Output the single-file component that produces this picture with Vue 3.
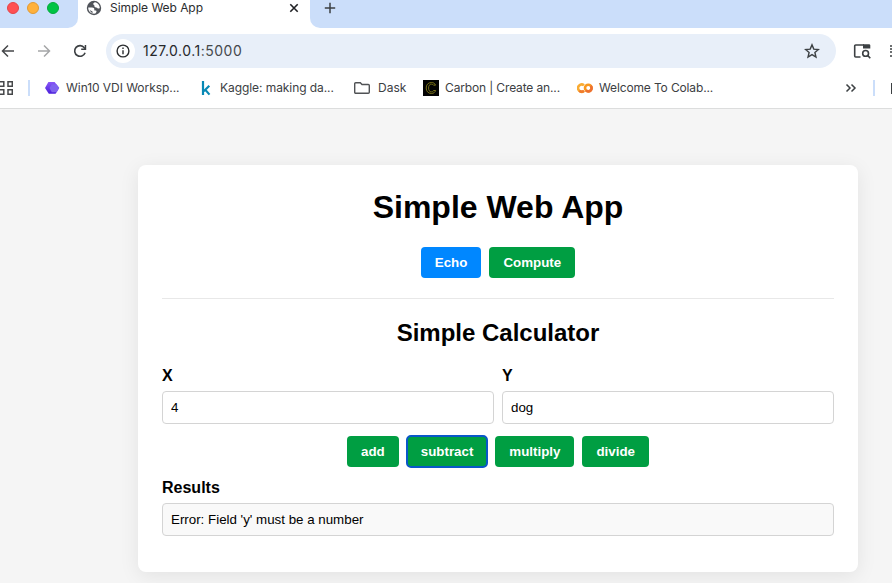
<script setup>
import { ref } from 'vue'

const x = ref('4')
const y = ref('dog')
const result = ref("Error: Field 'y' must be a number")
const active = ref('subtract')
const operations = ['add', 'subtract', 'multiply', 'divide']
</script>

<template>
  <div class="window">
    <header class="chrome">
      <div class="tabstrip">
        <div class="lights">
          <i class="light red"></i><i class="light amber"></i><i class="light green"></i>
        </div>
        <div class="tab">
          <svg class="globe" width="16" height="16" viewBox="0 0 16 16">
            <circle cx="8" cy="8" r="7.200" fill="#50545a" />
            <path d="M2.200 7.500h3.900c1.500 0 2.300.7 2.200 1.900-.1 1 .3 1.300 1.400 1.200.9-.1 1 .8.6 1.600L9.400 13.600C5.200 14.300 2.200 11.300 2.200 7.500zM3.800 9.300c.2 1.100.9 1.600 1.900 1.700.7.100.9.6.9 1.300v.8C5 12.500 3.600 11 3.800 9.300z" fill="#fff" fill-rule="evenodd" />
            <path d="M9.200 2.300c-1.200.4-2.100 1.100-1.900 2 .2.700 1.200.5 1.100 1.400-.1 1.300.7 1.800 1.900 1.700 1.200 0 1 1.200 2.100 1.200.5 0 .9-.2 1.400-.6C13.700 5.200 11.900 3 9.200 2.300z" fill="#fff" />
          </svg>
          <span class="tab-title">Simple Web App</span>
          <svg class="close" width="10" height="10" viewBox="0 0 10 10"><path d="M1.300 1.300l7.400 7.400M8.700 1.300L1.300 8.700" stroke="#202124" stroke-width="1.600" /></svg>
        </div>
        <div class="newtab">
          <svg width="12" height="12" viewBox="0 0 12 12"><path d="M6 .8v10.400M.8 6h10.400" stroke="#3c4043" stroke-width="1.500" /></svg>
        </div>
      </div>

      <div class="toolbar">
        <svg class="back" width="16" height="16" viewBox="0 0 16 16"><path d="M14 8H2.800M8 2.500L2.500 8 8 13.500" fill="none" stroke="#454749" stroke-width="1.500" /></svg>
        <svg class="forward" width="16" height="16" viewBox="0 0 16 16"><path d="M2 8h11.200M8 2.500L13.500 8 8 13.500" fill="none" stroke="#a5a6a8" stroke-width="1.500" /></svg>
        <svg class="reload" width="16" height="16" viewBox="0 0 16 16"><path d="M13.100 9.700A5.350 5.350 0 1 1 12.300 4.700L13.500 6" fill="none" stroke="#3c4043" stroke-width="1.600" /><path d="M14.200 2v5H9.200V5.500h3.500V2z" fill="#3c4043" /></svg>
        <div class="omnibox">
          <span class="info">
            <svg width="14" height="14" viewBox="0 0 14 14"><circle cx="7" cy="7" r="5.900" fill="none" stroke="#2c2e30" stroke-width="1.400" /><path d="M7 6.200v4M7 3.600v1.500" stroke="#2c2e30" stroke-width="1.400" /></svg>
          </span>
          <span class="url">127.0.0.1<span class="port">:5000</span></span>
          <svg class="star" width="16" height="16" viewBox="0 0 16 16"><path d="M8 1.900l1.800 4.200 4.600.4-3.500 3 1.050 4.500L8 11.600 4.050 14l1.050-4.500-3.500-3 4.600-.4z" fill="none" stroke="#3c4043" stroke-width="1.400" /></svg>
        </div>
        <svg class="lens" width="18" height="16" viewBox="0 0 18 16">
          <path d="M7.500 14H2.700a1 1 0 0 1-1-1V3a1 1 0 0 1 1-1H11" fill="none" stroke="#3c4043" stroke-width="1.600" />
          <path d="M10 1.200h6a1.300 1.300 0 0 1 1.300 1.300V5.500H10z" fill="#3c4043" />
          <circle cx="12.600" cy="10.400" r="2.900" fill="none" stroke="#3c4043" stroke-width="1.600" />
          <path d="M14.600 12.400l2.700 2.800" stroke="#3c4043" stroke-width="1.600" />
        </svg>
        <svg class="edge-list" width="2" height="14" viewBox="0 0 2 14"><path d="M0 2h2M0 5h2M0 8h2M0 12h2" stroke="#3c4043" stroke-width="1.400" /></svg>
      </div>

      <nav class="bookmarks">
        <svg class="apps" width="13" height="16" viewBox="0 0 13 16"><path d="M-1 1.700h4.800v4.600H-1zM8 1.700h4.300v4.600H8zM-1 9.700h4.800v4.600H-1zM8 9.700h4.300v4.600H8z" fill="none" stroke="#454749" stroke-width="1.500" /></svg>
        <i class="rule"></i>
        <a class="bookmark win">
          <svg width="16" height="16" viewBox="0 0 16 16">
            <defs><linearGradient id="purple" x1="0" y1="0" x2="0" y2="1"><stop offset="0" stop-color="#8a58f8" /><stop offset="1" stop-color="#4a1fda" /></linearGradient></defs>
            <path d="M4.400 2h6.200l4.600 5.700-3.600 6.100H4.800L1 8z" fill="url(#purple)" />
            <path d="M7.700 4.300h4.700l2.800 3.700-2.500 4.200H7.800L5.500 8z" fill="#8063ef" />
          </svg>
          <span>Win10 VDI Worksp...</span>
        </a>
        <a class="bookmark kaggle">
          <svg width="16" height="16" viewBox="0 0 16 16"><path d="M5 1v14M11.300 5.700L5.800 11.200M7.200 9.600l4.300 5" fill="none" stroke="#0889b5" stroke-width="2.200" /></svg>
          <span>Kaggle: making da...</span>
        </a>
        <a class="bookmark dask">
          <svg width="16" height="16" viewBox="0 0 16 16"><path d="M1.700 2.700h4.600L8 4.500h6.300a1 1 0 0 1 1 1v6.800a1 1 0 0 1-1 1H1.700a1 1 0 0 1-1-1V3.700a1 1 0 0 1 1-1z" fill="none" stroke="#505255" stroke-width="1.400" /></svg>
          <span>Dask</span>
        </a>
        <a class="bookmark carbon">
          <svg width="16" height="16" viewBox="0 0 16 16"><rect width="16" height="16" fill="#030303" /><path d="M12.500 5.200C11.900 3.300 10.300 2.500 8.400 2.500 5 2.500 3.200 4.900 3.200 8s1.800 5.500 5.200 5.500c2.100 0 3.600-1.100 4.200-3h-2c-.4 1-1.100 1.400-2.200 1.400C6.500 11.900 5.600 10.300 5.600 8s.9-3.900 2.800-3.900c1.100 0 1.700.4 2.100 1.100z" fill="none" stroke="#857d1c" stroke-width=".9" /></svg>
          <span>Carbon | Create an...</span>
        </a>
        <a class="bookmark colab">
          <svg width="16" height="16" viewBox="0 0 16 16">
            <path d="M7 5.300A3.600 3.600 0 1 0 7 10.900" fill="none" stroke="#f9ab32" stroke-width="2.600" />
            <path d="M2.300 10.700A3.600 3.600 0 0 0 7 10.700" fill="none" stroke="#f07a2c" stroke-width="2.600" />
            <circle cx="11.300" cy="8.100" r="3.300" fill="none" stroke="#f9981e" stroke-width="2.600" />
            <path d="M8.900 10.400A3.300 3.300 0 0 0 13.700 5.800" fill="none" stroke="#ed7031" stroke-width="2.600" />
          </svg>
          <span>Welcome To Colab...</span>
        </a>
        <svg class="more" width="12" height="10" viewBox="0 0 12 10"><path d="M1.500 1.500L5 5 1.500 8.500M6.500 1.500L10 5 6.500 8.500" fill="none" stroke="#3c4043" stroke-width="1.500" /></svg>
        <i class="rule end"></i>
        <i class="edge-folder"></i>
      </nav>
    </header>

    <main class="page">
      <section class="card">
        <h1>Simple Web App</h1>
        <div class="actions">
          <button class="echo">Echo</button>
          <button>Compute</button>
        </div>
        <hr />
        <h2>Simple Calculator</h2>
        <div class="fields">
          <label>X<input v-model="x" type="text" /></label>
          <label>Y<input v-model="y" type="text" /></label>
        </div>
        <div class="actions operations">
          <button v-for="op in operations" :key="op" :class="{ focused: op === active }" @click="active = op">{{ op }}</button>
        </div>
        <div class="label">Results</div>
        <output class="result">{{ result }}</output>
      </section>
    </main>
  </div>
</template>

<style>
body { margin: 0; background: #f5f5f5; overflow: hidden; }
</style>

<style scoped>
* { box-sizing: border-box; }
svg { display: block; flex: none; }
.window { height: 583px; overflow: hidden; display: flex; flex-direction: column; background: #f5f5f5; font-family: "Liberation Sans", Arial, sans-serif; }
.chrome { flex: none; height: 109px; background: #fff; border-bottom: 1px solid #dcdddd; font-family: Inter, Roboto, sans-serif; color: #3c4043; overflow: hidden; }
.tabstrip { display: flex; height: 28px; }
.lights { width: 78px; height: 28px; padding: 2px 0 0 7px; background: #cbdefa; border-bottom-right-radius: 10px; display: flex; gap: 8px; }
.light { width: 12px; height: 12px; border-radius: 50%; }
.red { background: #ff5053; border: 1px solid #e44448; }
.amber { background: #ffb13c; border: 1px solid #e19a34; }
.green { background: #00c444; border: 1px solid #05aa3c; }
.tab { width: 232px; height: 16px; padding: 0 11px 0 8px; display: flex; align-items: center; background: #fff; }
.tab-title { margin-left: 8px; font-size: 12px; line-height: 16px; letter-spacing: -.05px; color: #2a2c2e; white-space: nowrap; }
.close { margin-left: auto; }
.newtab { flex: 1; height: 28px; padding: 2px 0 0 14px; background: #cbdefa; border-bottom-left-radius: 10px; }
.toolbar { height: 46px; display: flex; align-items: center; }
.forward { margin-left: 20px; }
.reload { margin-left: 20px; }
.omnibox { width: 730px; height: 34px; margin: 0 0 0 18px; padding: 0 16px 0 5px; border-radius: 17px; background: #e8eff9; display: flex; align-items: center; }
.info { width: 24px; height: 24px; border-radius: 50%; background: #fff; display: grid; place-items: center; }
.url { margin-left: 8px; font-size: 14px; line-height: 18px; letter-spacing: .5px; color: #26282b; }
.port { color: #46494d; }
.star { margin-left: auto; }
.lens { margin-left: 17px; }
.edge-list { margin-left: 19px; }
.bookmarks { display: flex; align-items: center; height: 28px; font-size: 12px; line-height: 16px; }
.apps { width: 13px; }
.rule { flex: none; width: 2px; height: 16px; margin-left: 15px; background: #cbdefa; }
.bookmark { flex: none; display: flex; align-items: center; gap: 6px; white-space: nowrap; }
.win { width: 154px; margin-left: 14px; letter-spacing: -.05px; }
.kaggle { width: 156px; letter-spacing: -.07px; }
.dask { width: 69px; gap: 8px; }
.carbon { width: 154px; letter-spacing: -.14px; }
.colab { width: 140px; letter-spacing: -.14px; }
.more { margin-left: 128px; }
.rule.end { margin-left: 16px; }
.edge-folder { width: 1px; height: 11px; margin-left: 16px; background: #3c4043; }
.page { flex: 1; padding-top: 56px; color: #000; }
.card { width: 720px; height: 407px; margin-left: 138px; padding: 24px; background: #fff; border-radius: 8px; box-shadow: 0 4px 20px rgba(0, 0, 0, .08); }
h1 { margin: 0; font-size: 32px; line-height: 36px; text-align: center; }
h2 { margin: 0; padding-top: 20px; font-size: 24px; line-height: 28px; text-align: center; }
.actions { display: flex; justify-content: center; gap: 8px; margin-top: 22px; }
button { height: 31px; padding: 8px 14px; border: 0; border-radius: 4px; background: #009e42; color: #fff; font: bold 13.333px/15px "Liberation Sans", Arial, sans-serif; }
.echo { background: #0087ff; }
.focused { outline: 2px solid #0957c9; outline-offset: -1px; }
hr { height: 1px; margin: 20px 0 0; border: 0; background: #e8e8e8; }
.fields { display: grid; grid-template-columns: 1fr 1fr; gap: 8px; margin-top: 20px; }
label, .label { display: block; font-size: 16px; font-weight: bold; line-height: 18px; }
input, .result { display: block; width: 100%; height: 33px; margin-top: 6px; padding: 8px; border: 1px solid #d4d4d4; border-radius: 4px; background: #fff; color: #000; font: 13.333px/15px "Liberation Sans", Arial, sans-serif; outline: 0; }
.operations { margin-top: 12px; }
.label { margin-top: 12px; }
.result { background: #f9f9f9; }
</style>
